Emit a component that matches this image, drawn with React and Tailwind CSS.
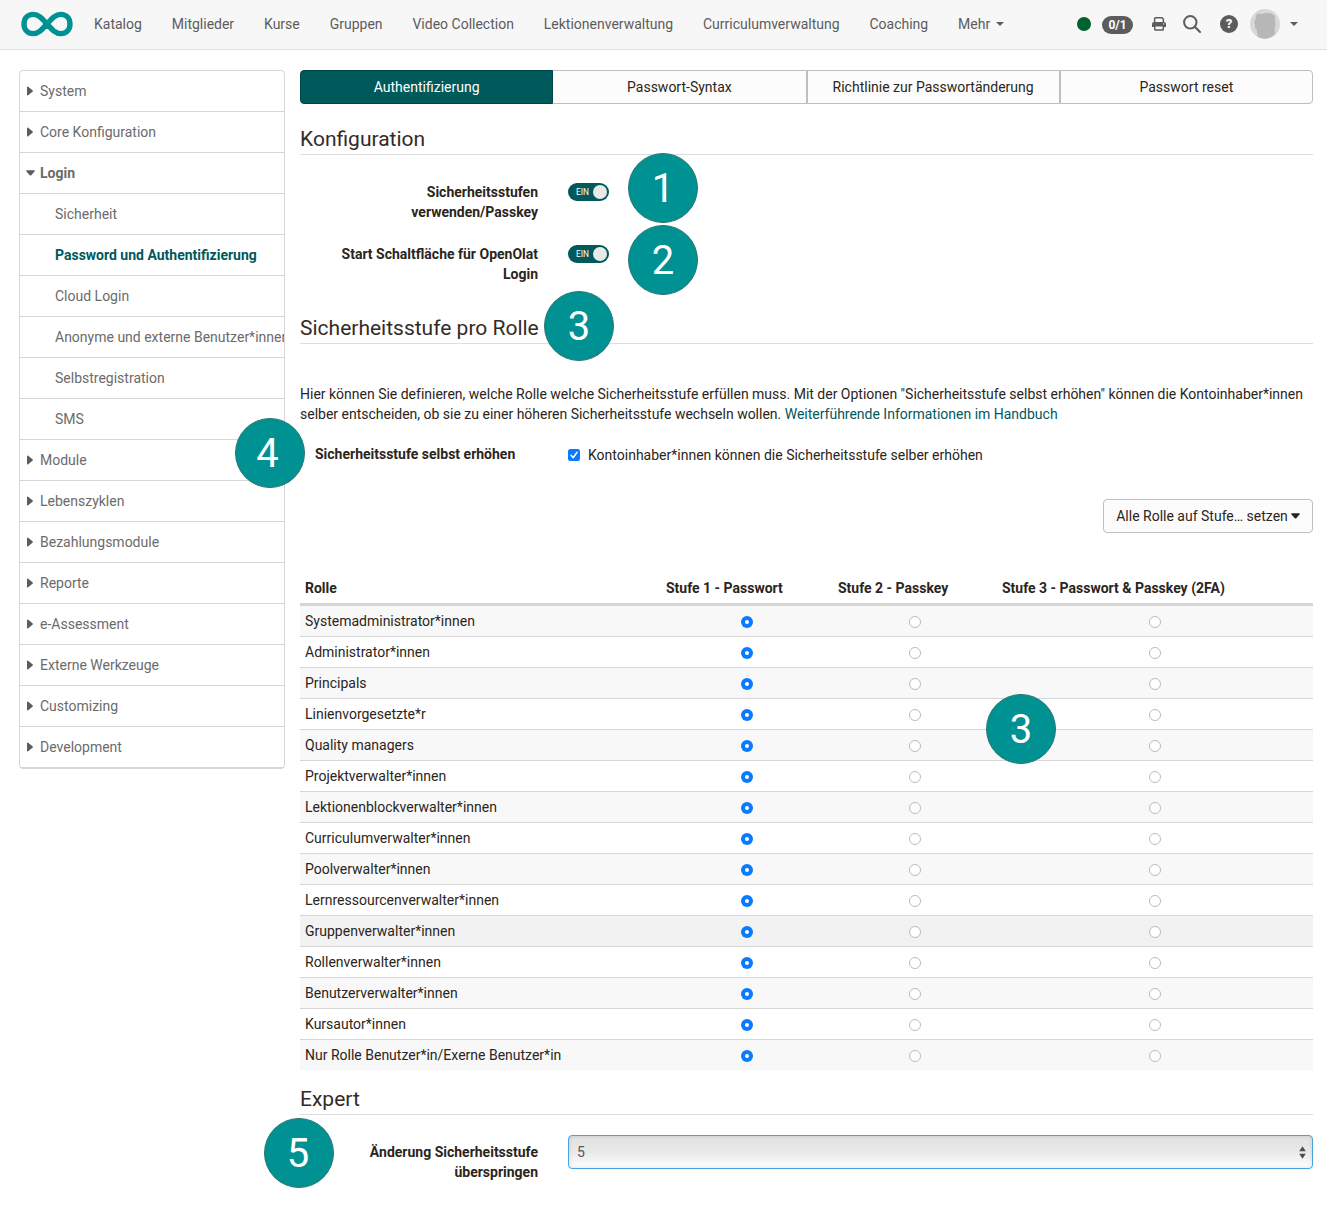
import React from "react";

const nav = ["Katalog", "Mitglieder", "Kurse", "Gruppen", "Video Collection", "Lektionenverwaltung", "Curriculumverwaltung", "Coaching"];

const menu = [
  { t: "System" },
  { t: "Core Konfiguration" },
  { t: "Login", open: true },
  { t: "Sicherheit", sub: true },
  { t: "Password und Authentifizierung", sub: true, active: true },
  { t: "Cloud Login", sub: true },
  { t: "Anonyme und externe Benutzer*innen", sub: true },
  { t: "Selbstregistration", sub: true },
  { t: "SMS", sub: true },
  { t: "Module" },
  { t: "Lebenszyklen" },
  { t: "Bezahlungsmodule" },
  { t: "Reporte" },
  { t: "e-Assessment" },
  { t: "Externe Werkzeuge" },
  { t: "Customizing" },
  { t: "Development" },
];

const roles = [
  "Systemadministrator*innen",
  "Administrator*innen",
  "Principals",
  "Linienvorgesetzte*r",
  "Quality managers",
  "Projektverwalter*innen",
  "Lektionenblockverwalter*innen",
  "Curriculumverwalter*innen",
  "Poolverwalter*innen",
  "Lernressourcenverwalter*innen",
  "Gruppenverwalter*innen",
  "Rollenverwalter*innen",
  "Benutzerverwalter*innen",
  "Kursautor*innen",
  "Nur Rolle Benutzer*in/Exerne Benutzer*in",
];

function CaretRight() {
  return (
    <svg className="h-[10px] w-[6px]" viewBox="0 0 6 10" fill="#5c5c5c">
      <path d="M0 1.2Q0 0 1.2 0.700L5.500 4.300Q6.200 5 5.500 5.700L1.200 9.300Q0 10 0 8.800Z" />
    </svg>
  );
}

function CaretDown({ className, fill }) {
  return (
    <svg className={className} viewBox="0 0 10 6" fill={fill}>
      <path d="M1 0H9Q10.400 0.200 9.500 1.200L5.800 5.500Q5 6.200 4.200 5.500L0.500 1.200Q-0.400 0.200 1 0Z" />
    </svg>
  );
}

function MenuRow({ item }) {
  if (item.sub) {
    return (
      <li className={"h-[41px] overflow-hidden whitespace-nowrap border-b border-[#d6d6d6] pl-[35px] leading-[40px] " + (item.active ? "font-bold text-[#00595b]" : "text-[#6b6b6b]")}>
        {item.t}
      </li>
    );
  }
  return (
    <li className={"flex h-[41px] items-center border-b border-[#d6d6d6] text-[#6b6b6b] " + (item.open ? "font-bold" : "")}>
      <span className="flex w-5 items-center pl-[6px]">
        {item.open ? <CaretDown className="h-[6px] w-[9px]" fill="#5c5c5c" /> : <span className="pl-[1px]"><CaretRight /></span>}
      </span>
      <span>{item.t}</span>
    </li>
  );
}

function Heading({ children, className }) {
  return <h2 className={"h-[29px] border-b border-[#dedede] pt-px text-[21px] leading-[25px] text-[#332b26] " + className}>{children}</h2>;
}

function Toggle() {
  return (
    <span className="flex h-[18px] w-[41px] items-center justify-between rounded-full bg-[#00595b] pl-2 pr-[2px]">
      <span className="pt-px text-[8.400px] leading-none text-white">EIN</span>
      <span className="h-[14px] w-[14px] rounded-full bg-[#e9e9e9]" />
    </span>
  );
}

function Radio({ on }) {
  return on ? (
    <span className="mt-[2px] flex h-3 w-3 items-center justify-center rounded-full bg-[#0a7aff]">
      <span className="h-1 w-1 rounded-full bg-white" />
    </span>
  ) : (
    <span className="mt-[2px] h-3 w-3 rounded-full border border-[#bcbcbc] bg-white" />
  );
}

function Marker({ n, className }) {
  return (
    <span className={"absolute z-10 flex h-[70px] w-[70px] items-center justify-center rounded-full border border-[#2a7574] bg-[#009292] pt-[2px] text-[40px] leading-none text-white " + className}>
      {n}
    </span>
  );
}

function Logo() {
  return (
    <svg className="h-[26px] w-[52px]" viewBox="0 0 52 26" fill="none" stroke="#009292" strokeWidth="5.400">
      <path d="M26 13C21 7.500 17.500 3.400 12.200 3.400C6.600 3.400 3 7.500 3 13S6.600 22.600 12.200 22.600C17.500 22.600 21 18.500 26 13S34.500 3.400 39.800 3.400C45.400 3.400 49 7.500 49 13S45.400 22.600 39.800 22.600C34.500 22.600 31 18.500 26 13Z" />
    </svg>
  );
}

function Printer() {
  return (
    <svg className="h-[14px] w-[14px]" viewBox="0 0 14 14" fill="none">
      <path d="M2.600 5V1.800Q2.600 0.800 3.600 0.800H10L11.400 2.200V5" stroke="#5c5c5c" strokeWidth="1.500" />
      <path d="M2 5H12Q14 5 14 7V10H0V7Q0 5 2 5Z" fill="#5c5c5c" />
      <path d="M2.700 8.700H11.300V12.200Q11.300 13 10.500 13H3.500Q2.700 13 2.700 12.200Z" fill="#f7f7f7" stroke="#5c5c5c" strokeWidth="1.500" />
      <circle cx="11.700" cy="6.900" r="0.700" fill="#f7f7f7" />
    </svg>
  );
}

function Avatar() {
  return (
    <svg className="h-[30px] w-[30px]" viewBox="0 0 30 30">
      <circle cx="15" cy="15" r="15" fill="#d8d8d8" />
      <path d="M6 6L8 4.500L12 5L15 4L20 4L23 5.500L25 7V12L25.500 15L24.500 20L25 25Q20 29.500 15 29.700Q10 29.500 8 27.500L7 24L6.500 20L5 19V15L4 13L5.500 11Z" fill="#b7b7b7" />
    </svg>
  );
}

export default function App() {
  return (
    <div className="relative h-[1230px] w-[1327px] overflow-hidden bg-white font-['Roboto',sans-serif] text-[14px] leading-5 text-[#2b2520]">
      <header className="flex h-[50px] items-center justify-between border-b border-[#dfdfdf] bg-[#f7f7f7] pb-[2px] pl-[21px] pr-[29px] text-[#5c5c5c]">
        <div className="flex items-center">
          <Logo />
          <nav className="ml-[21px] flex gap-[29.900px]">
            {nav.map((n) => <span key={n}>{n}</span>)}
            <span className="flex items-center gap-[6px]">Mehr
              <svg className="mt-px h-1 w-2" viewBox="0 0 8 4" fill="#5c5c5c"><path d="M0 0H8L4 4Z" /></svg>
            </span>
          </nav>
        </div>
        <div className="flex items-center">
          <span className="h-[14px] w-[14px] rounded-full bg-[#00622f]" />
          <span className="ml-[11px] mt-[2px] flex h-[18px] w-[31px] items-center justify-center rounded-full bg-[#5c5c5c] text-[12px] font-bold leading-none text-white">0/1</span>
          <span className="ml-[19px]"><Printer /></span>
          <svg className="ml-[17px] h-[18px] w-[18px]" viewBox="0 0 18 18" fill="none" stroke="#5c5c5c" strokeWidth="2">
            <circle cx="7.300" cy="7.300" r="6.200" /><path d="M11.800 11.800L17 17" strokeLinecap="round" />
          </svg>
          <span className="ml-[19px] flex h-[18px] w-[18px] items-center justify-center rounded-full bg-[#5c5c5c] text-[13px] font-black leading-none text-[#f7f7f7]">?</span>
          <span className="ml-3"><Avatar /></span>
          <svg className="ml-[10px] mt-px h-1 w-2" viewBox="0 0 8 4" fill="#5c5c5c"><path d="M0 0H8L4 4Z" /></svg>
        </div>
      </header>

      <div className="flex pl-[19px] pt-5">
        <aside className="h-[699px] w-[266px] shrink-0 rounded border border-[#d6d6d6]">
          <ul className="overflow-hidden">{menu.map((m) => <MenuRow key={m.t} item={m} />)}</ul>
        </aside>

        <main className="ml-[15px] w-[1013px]">
          <div className="grid h-[34px] grid-cols-4 text-center leading-8">
            <span className="rounded-l border border-[#004547] bg-[#00595b] text-white">Authentifizierung</span>
            <span className="border border-l-0 border-[#bfbfbf] bg-[#fcfcfc]">Passwort-Syntax</span>
            <span className="border border-[#bfbfbf] bg-[#fcfcfc]">Richtlinie zur Passwortänderung</span>
            <span className="rounded-r border border-[#bfbfbf] bg-[#fcfcfc]">Passwort reset</span>
          </div>

          <Heading className="mt-[22px]">Konfiguration</Heading>
          <div className="mt-[27px] flex h-[62px]">
            <span className="w-[238px] text-right font-bold">Sicherheitsstufen<br />verwenden/Passkey</span>
            <span className="ml-[30px] mt-px"><Toggle /></span>
          </div>
          <div className="flex h-[71px]">
            <span className="w-[238px] text-right font-bold">Start Schaltfläche für OpenOlat<br />Login</span>
            <span className="ml-[30px] mt-px"><Toggle /></span>
          </div>

          <Heading>Sicherheitsstufe pro Rolle</Heading>
          <p className="mt-10 whitespace-nowrap tracking-[-0.006px]">
            Hier können Sie definieren, welche Rolle welche Sicherheitsstufe erfüllen muss. Mit der Optionen "Sicherheitsstufe selbst erhöhen" können die Kontoinhaber*innen<br />
            selber entscheiden, ob sie zu einer höheren Sicherheitsstufe wechseln wollen. <a className="text-[#00595b]">Weiterführende Informationen im Handbuch</a>
          </p>

          <div className="mt-5 flex h-[55px]">
            <span className="w-[268px] pl-[15px] font-bold">Sicherheitsstufe selbst erhöhen</span>
            <svg className="mt-[5px] h-3 w-3" viewBox="0 0 12 12">
              <rect width="12" height="12" rx="2.500" fill="#0a7aff" />
              <path d="M3 6.300L5.200 8.800L9 3.300" fill="none" stroke="#fff" strokeWidth="1.500" strokeLinecap="round" strokeLinejoin="round" />
            </svg>
            <span className="ml-2 mt-px">Kontoinhaber*innen können die Sicherheitsstufe selber erhöhen</span>
          </div>

          <div className="flex justify-end">
            <button className="flex h-[34px] w-[210px] items-center justify-center gap-[3px] whitespace-nowrap rounded border border-[#bfbfbf] bg-[#fcfcfc]">
              Alle Rolle auf Stufe… setzen
              <CaretDown className="h-[6px] w-[9px]" fill="#2b2520" />
            </button>
          </div>

          <div className="mt-[40px]">
            <div className="grid h-[33px] grid-cols-[361px_172px_164px_316px] border-b-[3px] border-[#d6d6d6] pt-[5px] font-bold *:pl-[5px]">
              <span>Rolle</span>
              <span>Stufe 1 - Passwort</span>
              <span>Stufe 2 - Passkey</span>
              <span>Stufe 3 - Passwort &amp; Passkey (2FA)</span>
            </div>
            {roles.map((r, i) => (
              <div
                key={r}
                className={"grid grid-cols-[361px_172px_164px_316px] items-center border-[#d6d6d6] " + (i < 14 ? "h-[31px] border-b " : "h-[30px] ") + (i === 10 ? "bg-[#f2f2f2]" : i % 2 === 0 ? "bg-[#f8f8f8]" : "bg-white")}
              >
                <span className="pl-[5px]">{r}</span>
                <span className="flex justify-center"><Radio on /></span>
                <span className="flex justify-center"><Radio /></span>
                <span className="flex justify-center"><Radio /></span>
              </div>
            ))}
          </div>

          <Heading className="mt-[16px]">Expert</Heading>
          <div className="mt-5 flex">
            <span className="w-[238px] pt-[7px] text-right font-bold">Änderung Sicherheitsstufe<br />überspringen</span>
            <div className="ml-[30px] flex h-[34px] w-[745px] items-center justify-between rounded border border-[#4ba3e3] bg-linear-to-b from-[#e2e2e2] via-[#e9e9e9] to-white pl-2 pr-[6px] text-[#555] shadow-[inset_0_0_4px_rgba(0,0,0,0.12)]">
              <span>5</span>
              <svg className="h-[13px] w-[7px]" viewBox="0 0 7 13" fill="#4d4d4d"><path d="M3.500 0.300L6.800 5.300H0.200Z M0.200 7.700H6.800L3.500 12.700Z" /></svg>
            </div>
          </div>
        </main>
      </div>

      <Marker n="1" className="left-[628px] top-[153px]" />
      <Marker n="2" className="left-[628px] top-[225px]" />
      <Marker n="3" className="left-[544px] top-[291px]" />
      <Marker n="4" className="left-[235px] top-[418px] pr-[5px]" />
      <Marker n="3" className="left-[986px] top-[694px]" />
      <Marker n="5" className="left-[264px] top-[1118px] pr-[2px]" />
    </div>
  );
}
